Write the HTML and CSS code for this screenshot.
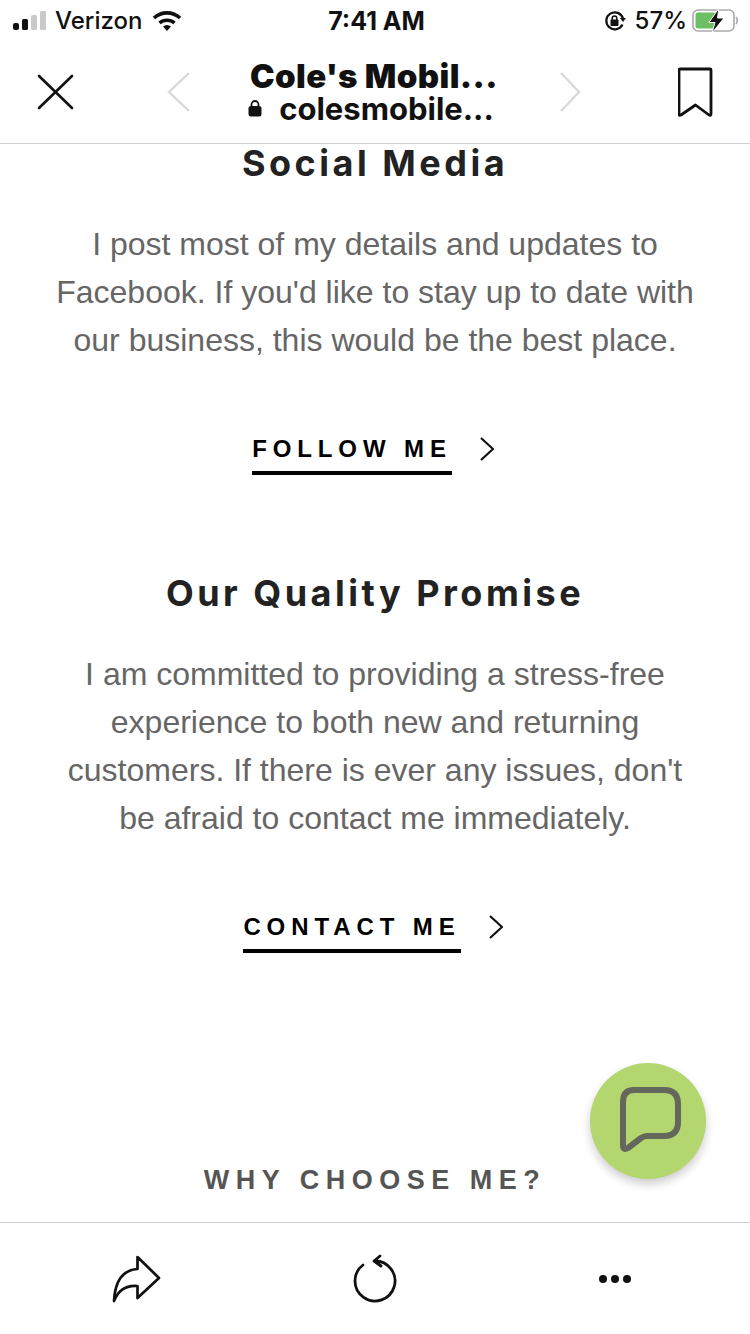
FILE: index.html
```html
<!DOCTYPE html>
<html lang="en">
  <head>
    <meta charset="UTF-8" />
    <meta name="viewport" content="width=device-width, initial-scale=1.0" />
    <title>Cole's Mobile</title>
    <link rel="stylesheet" href="styles.css">
  </head>
  <body>
    <div class="phone">
      <header class="top">
        <div class="status">
          <div class="status-left">
            <svg class="signal" width="34" height="20" viewBox="0 0 34 20">
              <rect x="0" y="12" width="6" height="7" rx="2" fill="#111" />
              <rect x="9" y="8" width="6" height="11" rx="1.5" fill="#111" />
              <rect x="18" y="4" width="6" height="15" rx="1.5" fill="#c9c9c9" />
              <rect x="27" y="0" width="6" height="19" rx="1.5" fill="#c9c9c9" />
            </svg>
            <span>Verizon</span>
            <svg class="wifi" width="30" height="22" viewBox="0 0 30 22">
              <path d="M2 8 A19 19 0 0 1 28 8" fill="none" stroke="#111" stroke-width="3.6" />
              <path d="M7.5 13 A11.5 11.5 0 0 1 22.5 13" fill="none" stroke="#111" stroke-width="3.6" />
              <path d="M11 16.5 A6 6 0 0 1 19 16.5 L15 21 Z" fill="#111" />
            </svg>
          </div>
          <div class="status-time">7:41 AM</div>
          <div class="status-right">
            <svg width="22" height="22" viewBox="0 0 22 22">
              <path d="M18.5 14.5 A8.5 8.5 0 1 1 19 8.5" fill="none" stroke="#111" stroke-width="2.2" />
              <path d="M16 8 L22 8 L19 12 Z" fill="#111" />
              <rect x="6.5" y="9.5" width="8" height="6.5" rx="1" fill="#111" />
              <path d="M8.2 10 V8.2 A2.3 2.3 0 0 1 12.8 8.2 V10" fill="none" stroke="#111" stroke-width="1.5" />
            </svg>
            <span class="pct">57%</span>
            <svg width="48" height="26" viewBox="0 0 48 26">
              <rect x="1" y="2" width="41" height="21" rx="5" fill="none" stroke="#aaa" stroke-width="1.6" />
              <rect x="3.5" y="4.5" width="21" height="16" rx="2.5" fill="#6cbf65" />
              <path d="M44 9 Q46.5 12.5 44 16" fill="none" stroke="#aaa" stroke-width="1.6" />
              <path d="M27 0 L17 14.5 H23 L20 25 L32 10 H25.5 Z" fill="#111" stroke="#fff" stroke-width="1" />
            </svg>
          </div>
        </div>
        <nav class="nav">
          <svg class="nav-icon" width="40" height="40" viewBox="0 0 40 40">
            <path d="M3 4 L36 36 M36 4 L3 36" fill="none" stroke="#111" stroke-width="2.6" stroke-linecap="round" />
          </svg>
          <svg class="nav-back" width="26" height="42" viewBox="0 0 26 42">
            <path d="M23 2 L3 21 L23 40" fill="none" stroke="#d9d9d9" stroke-width="2.4" />
          </svg>
          <div class="nav-title">
            <div class="site-name">Cole's Mobil...</div>
            <div class="site-url">
              <svg width="14" height="17" viewBox="0 0 14 17">
                <rect x="0.5" y="6" width="13" height="10.5" rx="2.5" fill="#111" />
                <path d="M3.5 7 V4.5 A3.5 3.5 0 0 1 10.5 4.5 V7" fill="none" stroke="#111" stroke-width="1.8" />
              </svg>
              <span>colesmobile...</span>
            </div>
          </div>
          <svg class="nav-forward" width="26" height="42" viewBox="0 0 26 42">
            <path d="M3 2 L21 21 L3 40" fill="none" stroke="#d9d9d9" stroke-width="2.4" />
          </svg>
          <svg class="nav-mark" width="36" height="52" viewBox="0 0 36 52">
            <path d="M2 3 H32 Q33 3 33 4 V48 Q33 50 31 49 L17.5 39 L3 49 Q1 50 1 48 V4 Q1 3 2 3 Z" fill="none" stroke="#111" stroke-width="2.8" stroke-linejoin="round" />
          </svg>
        </nav>
      </header>

      <main class="content">
        <section class="block">
          <h2>Social Media</h2>
          <p>I post most of my details and updates to<br>Facebook. If you'd like to stay up to date with<br>our business, this would be the best place.</p>
          <div class="link-row">
            <a class="more">FOLLOW ME</a>
            <svg width="14" height="24" viewBox="0 0 14 24">
              <path d="M1 1 L13 12 L1 23" fill="none" stroke="#111" stroke-width="2.2" />
            </svg>
          </div>
        </section>
        <section class="block block-second">
          <h2>Our Quality Promise</h2>
          <p>I am committed to providing a stress-free<br>experience to both new and returning<br>customers. If there is ever any issues, don't<br>be afraid to contact me immediately.</p>
          <div class="link-row">
            <a class="more">CONTACT ME</a>
            <svg width="14" height="24" viewBox="0 0 14 24">
              <path d="M1 1 L13 12 L1 23" fill="none" stroke="#111" stroke-width="2.2" />
            </svg>
          </div>
        </section>
        <div class="why">WHY CHOOSE ME?</div>
      </main>

      <button class="chat">
        <svg width="62" height="68" viewBox="0 0 62 68">
          <path d="M15 3 H45 Q59 3 59 17 V35 Q59 49 45 49 H28 Q25 49 22 51 L9 61 Q4 64 4 58 V15 Q4 3 15 3 Z" fill="none" stroke="#63675c" stroke-width="6" stroke-linejoin="round" />
        </svg>
      </button>

      <footer class="bottom">
        <svg width="50" height="50" viewBox="0 0 50 50">
          <path d="M25.5 15 V3 L47 24 L25.5 44 V32 C14 31 6 37 2 47 C3 28 10 16 25.5 15 Z" fill="none" stroke="#111" stroke-width="2.7" stroke-linejoin="round" stroke-linecap="round" />
        </svg>
        <svg width="46" height="50" viewBox="0 0 46 50">
          <path d="M22.5 7 A20 20 0 1 1 11 11 M28 2 L22 7 L29 12" fill="none" stroke="#111" stroke-width="2.8" stroke-linecap="round" stroke-linejoin="round" />
        </svg>
        <svg class="dots" width="34" height="10" viewBox="0 0 34 10">
          <circle cx="5" cy="5" r="4" fill="#111" />
          <circle cx="17" cy="5" r="4" fill="#111" />
          <circle cx="29" cy="5" r="4" fill="#111" />
        </svg>
      </footer>
    </div>
  </body>
</html>
```

FILE: styles.css
```css
* {
  box-sizing: border-box;
}
body {
  margin: 0;
  background: #fff;
  font-family: "Liberation Sans", Arial, sans-serif;
}
.phone {
  position: relative;
  width: 750px;
  height: 1334px;
  display: flex;
  flex-direction: column;
  overflow: hidden;
}
.top {
  height: 144px;
  border-bottom: 1px solid #cfcfcf;
  flex: none;
}
.status {
  height: 41px;
  padding: 0 10px 0 13px;
  display: grid;
  grid-template-columns: 1fr auto 1fr;
  align-items: center;
  font-family: Inter, sans-serif;
  font-size: 24px;
  font-weight: 500;
  color: #111;
}
.status-left {
  display: flex;
  align-items: center;
  gap: 8px;
}
.wifi {
  margin-left: 2px;
}
.status-time {
  font-size: 25px;
  font-weight: 700;
}
.status-right {
  display: flex;
  align-items: center;
  justify-content: flex-end;
  gap: 9px;
}
.status-right .pct {
  margin-right: -4px;
}
.nav {
  height: 102px;
  padding: 0 36px;
  display: flex;
  align-items: center;
  color: #111;
}
.nav-back {
  margin-left: 90px;
}
.nav-title {
  width: 366px;
  text-align: center;
  font-family: Inter, sans-serif;
  line-height: 33px;
  padding-top: 1px;
}
.site-name {
  font-size: 33px;
  font-weight: 900;
  letter-spacing: 0.4px;
  padding-right: 2px;
}
.site-url {
  font-size: 31px;
  font-weight: 700;
  display: flex;
  justify-content: center;
  align-items: center;
  gap: 17px;
  margin-top: -1px;
  padding-right: 8px;
}
.nav-mark {
  margin-left: auto;
}
.content {
  flex: 1;
  text-align: center;
}
.block h2 {
  margin: 0;
  font-family: Inter, sans-serif;
  font-size: 36px;
  line-height: 38px;
  font-weight: 700;
  letter-spacing: 3.5px;
  color: #222;
}
.block p {
  margin: 38px 0 0;
  font-size: 32px;
  line-height: 48px;
  color: #666;
}
.block-second {
  margin-top: 99px;
}
.link-row {
  margin-top: 70px;
  display: flex;
  justify-content: center;
  align-items: flex-start;
  gap: 28px;
  padding-right: 4px;
}
.link-row svg {
  margin-top: 3px;
}
.more {
  display: block;
  padding-bottom: 7px;
  border-bottom: 4px solid #000;
  font-size: 24px;
  line-height: 30px;
  font-weight: 700;
  letter-spacing: 5.9px;
  color: #000;
}
.why {
  margin-top: 210px;
  font-size: 27px;
  line-height: 34px;
  font-weight: 700;
  letter-spacing: 6.5px;
  color: #555;
}
.chat {
  position: absolute;
  left: 590px;
  top: 1063px;
  width: 116px;
  height: 116px;
  border: none;
  border-radius: 50%;
  padding: 0 0 0 4px;
  background: #b3d66f;
  box-shadow: 0 5px 10px rgba(0, 0, 0, 0.2);
  display: flex;
  align-items: center;
  justify-content: center;
}
.bottom {
  height: 112px;
  flex: none;
  border-top: 1px solid #cfcfcf;
  background: #fff;
  padding: 0 112px;
  display: grid;
  grid-template-columns: 1fr auto 1fr;
  align-items: center;
}
.dots {
  justify-self: end;
  margin-right: 6px;
}
```
